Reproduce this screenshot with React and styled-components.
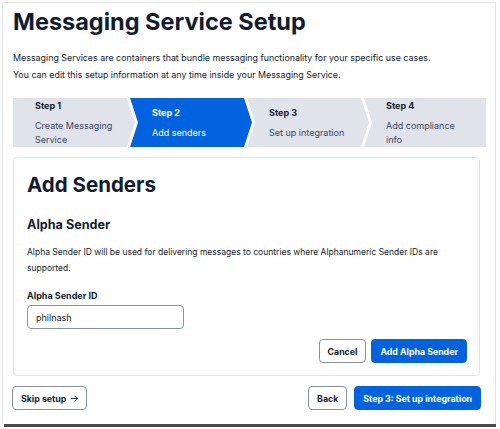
import React from 'react';
import styled, { createGlobalStyle } from 'styled-components';

const GlobalStyle = createGlobalStyle`
  html, body {
    margin: 0;
    padding: 0;
    background: #ffffff;
    font-family: Inter, "Noto Sans", "Liberation Sans", sans-serif;
    color: #121c2d;
  }
  * { box-sizing: border-box; }
`;

const Screen = styled.div`
  width: 500px;
  height: 429px;
  overflow: hidden;
  padding: 2px 4px 0 2px;
  background: #ffffff;
`;

const Frame = styled.div`
  height: 422px;
  border: 1px solid #e4e5ea;
  border-bottom: none;
  padding: 4px 9px 0 10px;
  display: flex;
  flex-direction: column;
`;

const ShadowBand = styled.div`
  height: 3px;
  background: #4a4a4a;
  margin-left: 2px;
`;

const Title = styled.h1`
  margin: 0;
  font-size: 23.5px;
  line-height: 30px;
  font-weight: 700;
`;

const Intro = styled.p`
  margin: 12px 0 0;
  font-size: 8.9px;
  line-height: 17px;
  color: #121c2d;
`;

const Stepper = styled.ol`
  list-style: none;
  margin: 15px 0 0;
  padding: 0;
  display: flex;
  height: 49px;
  flex-shrink: 0;
`;

const Step = styled.li`
  flex: 1;
  min-width: 0;
  display: flex;
  flex-direction: column;
  justify-content: center;
  gap: 6px;
  padding: 0 20px 0 22px;
  margin-left: ${p => (p.$first ? '0' : '-5px')};
  background: ${p => (p.$active ? '#0263e0' : '#e1e3ea')};
  color: ${p => (p.$active ? '#ffffff' : '#121c2d')};
  clip-path: ${p =>
    p.$last
      ? 'polygon(0 0, 100% 0, 100% 100%, 0 100%, 8px 50%)'
      : p.$first
      ? 'polygon(0 0, calc(100% - 8px) 0, 100% 50%, calc(100% - 8px) 100%, 0 100%)'
      : 'polygon(0 0, calc(100% - 8px) 0, 100% 50%, calc(100% - 8px) 100%, 0 100%, 8px 50%)'};
`;

const StepLabel = styled.span`
  font-size: 9px;
  font-weight: 700;
  line-height: 14px;
`;

const StepText = styled.span`
  font-size: 9px;
  line-height: 14px;
  color: ${p => (p.$active ? '#ffffff' : '#394762')};
`;

const Card = styled.section`
  margin: 10px 6px 0 0;
  border: 1px solid #e1e3ea;
  border-radius: 4px;
  padding: 14px 12px 12px 13px;
`;

const CardTitle = styled.h2`
  margin: 0;
  font-size: 20.5px;
  line-height: 26px;
  font-weight: 700;
`;

const SubTitle = styled.h3`
  margin: 18px 0 0;
  font-size: 12.6px;
  line-height: 18px;
  font-weight: 700;
`;

const Body = styled.p`
  margin: 10px 0 0;
  font-size: 8.5px;
  line-height: 16px;
`;

const Label = styled.label`
  display: block;
  margin-top: 14px;
  font-size: 9px;
  font-weight: 700;
  line-height: 12px;
`;

const Input = styled.input`
  display: block;
  margin-top: 3px;
  width: 157px;
  height: 24px;
  border: 1px solid #8891aa;
  border-radius: 4px;
  padding: 0 8px;
  font-family: inherit;
  font-size: 9px;
  color: #121c2d;
`;

const Actions = styled.div`
  display: flex;
  justify-content: flex-end;
  gap: 5px;
  margin-top: 10px;
`;

const Button = styled.button`
  height: 24px;
  padding: 0 8px;
  border-radius: 4px;
  font-family: inherit;
  font-size: 8.8px;
  font-weight: 700;
  display: inline-flex;
  align-items: center;
  gap: 5px;
  cursor: pointer;
  border: 1px solid ${p => (p.$primary ? '#0263e0' : '#8891aa')};
  background: ${p => (p.$primary ? '#0263e0' : '#ffffff')};
  color: ${p => (p.$primary ? '#ffffff' : '#121c2d')};
`;

const Footer = styled.div`
  display: flex;
  justify-content: space-between;
  margin: 10px 5px 0 -1px;
`;

const FooterRight = styled.div`
  display: flex;
  gap: 7px;
`;

const Arrow = () => (
  <svg width="7" height="7" viewBox="0 0 8 8" fill="none" stroke="#121c2d" strokeWidth="1" strokeLinecap="round" strokeLinejoin="round">
    <path d="M0.5 4h7M4.5 1l3 3-3 3" />
  </svg>
);

const steps = [
  { label: 'Step 1', text: 'Create Messaging Service' },
  { label: 'Step 2', text: 'Add senders', active: true },
  { label: 'Step 3', text: 'Set up integration' },
  { label: 'Step 4', text: 'Add compliance info' },
];

export default function App() {
  return (
    <>
      <GlobalStyle />
      <Screen>
        <Frame>
          <Title>Messaging Service Setup</Title>
          <Intro>
            Messaging Services are containers that bundle messaging functionality for your specific use cases.
            <br />
            You can edit this setup information at any time inside your Messaging Service.
          </Intro>
          <Stepper>
            {steps.map((s, i) => (
              <Step key={s.label} $active={s.active} $first={i === 0} $last={i === steps.length - 1}>
                <StepLabel>{s.label}</StepLabel>
                <StepText $active={s.active}>{s.text}</StepText>
              </Step>
            ))}
          </Stepper>
          <Card>
            <CardTitle>Add Senders</CardTitle>
            <SubTitle>Alpha Sender</SubTitle>
            <Body>
              Alpha Sender ID will be used for delivering messages to countries where Alphanumeric Sender IDs are
              supported.
            </Body>
            <Label htmlFor="alpha">Alpha Sender ID</Label>
            <Input id="alpha" defaultValue="philnash" />
            <Actions>
              <Button>Cancel</Button>
              <Button $primary>Add Alpha Sender</Button>
            </Actions>
          </Card>
          <Footer>
            <Button>
              Skip setup <Arrow />
            </Button>
            <FooterRight>
              <Button>Back</Button>
              <Button $primary>Step 3: Set up integration</Button>
            </FooterRight>
          </Footer>
        </Frame>
        <ShadowBand />
      </Screen>
    </>
  );
}
